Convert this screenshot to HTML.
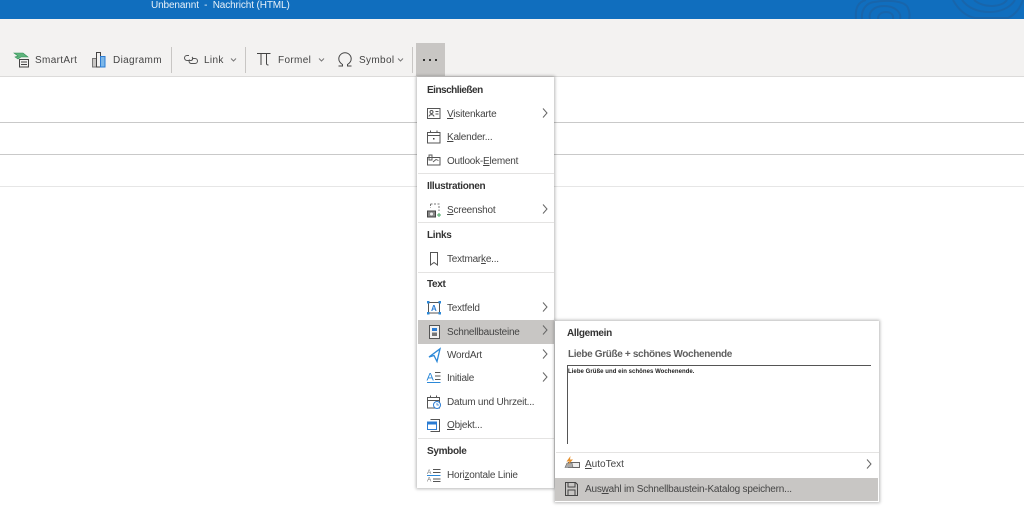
<!DOCTYPE html>
<html lang="de"><head><meta charset="utf-8"><title>Unbenannt - Nachricht (HTML)</title>
<style>
html,body{margin:0;padding:0;background:#fff;width:1024px;height:510px;overflow:hidden}
body{position:relative;font-family:"Liberation Sans",sans-serif;font-size:10px;color:#444;filter:blur(.3px)}
.a{position:absolute}
.t{position:absolute;white-space:nowrap;line-height:12px;height:12px}
.r{letter-spacing:.35px}
.m{letter-spacing:-.22px}
.h{font-weight:bold;color:#333;letter-spacing:-.32px}
.hl{position:absolute;background:#c8c6c4}
.sep{position:absolute;background:#e4e3e2;height:1px}
svg{position:absolute;overflow:visible}
u{text-decoration-thickness:1px;text-underline-offset:1px}
</style></head><body>
<div class="a" style="left:0;top:0;width:1024px;height:19px;background:#106ebe"></div>
<svg style="left:0;top:0" width="1024" height="19" fill="none" stroke="#1a64a8" stroke-width="2" opacity=".85">
<path d="M856 19C855 8 858 2 866 0M862 19C861 10 866 3 874 2C885 0 905 0 908 8C910 13 910 16 909 19M870 19C868 12 874 6 884 6C894 6 902 12 900 19M878 19C878 14 882 12 886 12C890 12 894 14 893 19"/>
<path d="M953 0C958 9 965 16 975 18H1008C1016 14 1020 8 1023 0M962 0C968 8 978 12 990 12C1000 12 1010 8 1015 0M974 0C980 5 986 6 992 6C998 6 1004 4 1007 0"/>
</svg>
<div class="t" style="left:151px;top:-1px;color:#e8f1f9;font-size:10px;letter-spacing:-.12px;line-height:13px;height:13px">Unbenannt &nbsp;-&nbsp; Nachricht (HTML)</div>
<div class="a" style="left:0;top:19px;width:1024px;height:57px;background:#f3f2f1"></div>
<div class="a" style="left:0;top:76px;width:1024px;height:1px;background:#dcdbda"></div>

<div class="a" style="left:0;top:122px;width:1024px;height:1px;background:#c9c9c9"></div>
<div class="a" style="left:0;top:154px;width:1024px;height:1px;background:#c9c9c9"></div>
<div class="a" style="left:0;top:186px;width:1024px;height:1px;background:#e6e6e6"></div>

<!-- ribbon -->
<svg style="left:13px;top:52px" width="18" height="16" fill="none"><path d="M1 1H10L15 5H8L5 7 2 5 5 4Z" fill="#5fb47c" stroke="#2f8f55" stroke-width=".6"/><rect x="6.500" y="7.500" width="9" height="7.500" fill="#f3f2f1" stroke="#444"/><path d="M8 10H14M8 12.500H14" stroke="#444"/></svg>
<div class="t r" style="left:35px;top:55px">SmartArt</div>
<svg style="left:92px;top:52px" width="14" height="16" fill="none"><rect x=".5" y="6.500" width="4" height="8.500" fill="#c8c6c4" stroke="#777"/><rect x="4.500" y=".5" width="4" height="14.500" fill="#f3f2f1" stroke="#444"/><rect x="8.500" y="4.500" width="4.500" height="10.500" fill="#7db7e8" stroke="#2b7cd3"/></svg>
<div class="t r" style="left:113px;top:55px">Diagramm</div>
<div class="a" style="left:171px;top:47px;width:1px;height:26px;background:#c8c6c4"></div>
<svg style="left:183px;top:54px" width="16" height="11" fill="none" stroke="#555"><path d="M6 1.500H4A2.500 2.500 0 0 0 4 6.500H8A2 2 0 0 0 9 3"/><path d="M9 4.500H12A2.500 2.500 0 0 1 12 9.500H8A2.500 2.500 0 0 1 6.500 5.500"/></svg>
<div class="t r" style="left:204px;top:55px">Link</div>
<svg style="left:230px;top:58px" width="7" height="4" fill="none" stroke="#777"><path d="M1 .5L3.500 3 6 .5"/></svg>
<div class="a" style="left:245px;top:47px;width:1px;height:26px;background:#c8c6c4"></div>
<svg style="left:257px;top:52px" width="14" height="14" fill="none" stroke="#444"><path d="M0 1.500H13.500M4 1.500V13M9.500 1.500V11.500Q9.500 13 11.500 13"/></svg>
<div class="t r" style="left:278px;top:55px">Formel</div>
<svg style="left:318px;top:58px" width="7" height="4" fill="none" stroke="#777"><path d="M1 .5L3.500 3 6 .5"/></svg>
<svg style="left:338px;top:52px" width="14" height="15" fill="none" stroke="#444"><path d="M.5 14H4.500V12.500C2 11 .8 9 .8 6.800A6.200 6 0 0 1 13.200 6.800C13.200 9 12 11 9.500 12.500V14H13.500"/></svg>
<div class="t r" style="left:359px;top:55px">Symbol</div>
<svg style="left:397px;top:58px" width="7" height="4" fill="none" stroke="#777"><path d="M1 .5L3.500 3 6 .5"/></svg>
<div class="a" style="left:412px;top:47px;width:1px;height:26px;background:#c8c6c4"></div>
<div class="hl" style="left:416px;top:43px;width:29px;height:33px"></div>
<div class="a" style="left:423px;top:59px;width:2px;height:2px;background:#333"></div>
<div class="a" style="left:429px;top:59px;width:2px;height:2px;background:#333"></div>
<div class="a" style="left:435px;top:59px;width:2px;height:2px;background:#333"></div>

<!-- main menu -->
<div class="a" style="left:417px;top:77px;width:137px;height:411px;background:#fff;box-shadow:0 0 3px 1px rgba(0,0,0,.28)"></div>
<div class="sep" style="left:418px;top:173px;width:136px"></div>
<div class="sep" style="left:418px;top:222px;width:136px"></div>
<div class="sep" style="left:418px;top:272px;width:136px"></div>
<div class="sep" style="left:418px;top:438px;width:136px"></div>
<div class="hl" style="left:418px;top:320px;width:136px;height:24px"></div>

<div class="t h" style="left:427px;top:85px;letter-spacing:-.5px">Einschließen</div>
<div class="t m" style="left:447px;top:109px"><u>V</u>isitenkarte</div>
<div class="t m" style="left:447px;top:132px"><u>K</u>alender...</div>
<div class="t m" style="left:447px;top:156px">Outlook-<u>E</u>lement</div>
<div class="t h" style="left:427px;top:181px">Illustrationen</div>
<div class="t m" style="left:447px;top:205px"><u>S</u>creenshot</div>
<div class="t h" style="left:427px;top:230px">Links</div>
<div class="t m" style="left:447px;top:254px">Textmar<u>k</u>e...</div>
<div class="t h" style="left:427px;top:279px">Text</div>
<div class="t m" style="left:447px;top:303px">Textfeld</div>
<div class="t m" style="left:447px;top:327px">Schnellbausteine</div>
<div class="t m" style="left:447px;top:350px">WordArt</div>
<div class="t m" style="left:447px;top:373px">Initiale</div>
<div class="t m" style="left:447px;top:397px">Datum und Uhrzeit...</div>
<div class="t m" style="left:447px;top:420px"><u>O</u>bjekt...</div>
<div class="t h" style="left:427px;top:446px">Symbole</div>
<div class="t m" style="left:447px;top:470px">Hori<u>z</u>ontale Linie</div>

<!-- chevrons -->
<svg style="left:542px;top:108px" width="6" height="10" fill="none" stroke="#666"><path d="M1 .5L5 5 1 9.500"/></svg>
<svg style="left:542px;top:204px" width="6" height="10" fill="none" stroke="#666"><path d="M1 .5L5 5 1 9.500"/></svg>
<svg style="left:542px;top:302px" width="6" height="10" fill="none" stroke="#666"><path d="M1 .5L5 5 1 9.500"/></svg>
<svg style="left:542px;top:325px" width="6" height="10" fill="none" stroke="#666"><path d="M1 .5L5 5 1 9.500"/></svg>
<svg style="left:542px;top:349px" width="6" height="10" fill="none" stroke="#666"><path d="M1 .5L5 5 1 9.500"/></svg>
<svg style="left:542px;top:372px" width="6" height="10" fill="none" stroke="#666"><path d="M1 .5L5 5 1 9.500"/></svg>

<!-- menu icons -->
<svg style="left:427px;top:108px" width="14" height="12" fill="none" stroke="#555"><rect x=".5" y=".5" width="12.500" height="10"/><circle cx="4.500" cy="4" r="1.500"/><path d="M2 8.500C2.500 6 6.500 6 7 8.500M8.500 3.500H11.500M8.500 6H11.500"/></svg>
<svg style="left:427px;top:130px" width="14" height="14" fill="none" stroke="#555"><rect x=".5" y="2.500" width="12.500" height="10.500"/><path d="M.5 5.500H13M3.500 .5V3M10 .5V3"/><rect x="6" y="8" width="1.500" height="1.500" fill="#444" stroke="none"/></svg>
<svg style="left:427px;top:154px" width="14" height="13" fill="none" stroke="#555"><rect x=".5" y="3.500" width="12.500" height="7.500"/><path d="M2 1H5V6H2ZM6 8L9 5.500 11.500 6.500" stroke-width=".9"/></svg>
<svg style="left:427px;top:203px" width="14" height="14" fill="none"><path d="M3.500 1H12V8" stroke="#777" stroke-dasharray="2 1.500"/><path d="M3.500 1V5" stroke="#777" stroke-dasharray="2 1.500"/><rect x=".5" y="8" width="8" height="6" fill="#888" stroke="#444"/><circle cx="4.500" cy="11" r="1.500" fill="#eee"/><path d="M12 10V14M10 12H14" stroke="#4aa564"/></svg>
<svg style="left:430px;top:252px" width="9" height="14" fill="none" stroke="#555"><path d="M.5 .5H7.500V13L4 10.500.5 13Z"/></svg>
<svg style="left:427px;top:301px" width="14" height="14" fill="none"><rect x="1.500" y="1.500" width="11" height="10.500" stroke="#555"/><text x="4" y="10" font-family="Liberation Sans" font-size="8" font-weight="bold" fill="#2b7cd3">A</text><g fill="#2b88d8"><rect x="0" y="0" width="2.500" height="2.500"/><rect x="11.500" y="0" width="2.500" height="2.500"/><rect x="0" y="11" width="2.500" height="2.500"/><rect x="11.500" y="11" width="2.500" height="2.500"/></g></svg>
<svg style="left:429px;top:325px" width="11" height="14" fill="none"><rect x=".5" y=".5" width="10" height="13" fill="#f3f2f1" stroke="#555"/><rect x="3" y="3" width="5" height="3" fill="#2b7cd3"/><rect x="3" y="7.500" width="5" height="3.500" fill="#777"/></svg>
<svg style="left:428px;top:348px" width="13" height="14" fill="none" stroke="#2b88d8" stroke-width="1.300"><path d="M12 .8L1 9 6 7.500 9 13.500 12 .8Z"/></svg>
<svg style="left:427px;top:371px" width="14" height="13" fill="none"><text x="-.5" y="9.500" font-family="Liberation Sans" font-size="11" fill="#2b88d8">A</text><path d="M8 1.500H13.500M8 5H13.500M8 8.500H13.500" stroke="#555"/><path d="M0 11.500H13.500" stroke="#2b88d8"/></svg>
<svg style="left:427px;top:395px" width="14" height="14" fill="none"><rect x=".5" y="2.500" width="12" height="10.500" stroke="#555"/><path d="M.5 5.500H12.500M3.500 .5V3M9.500 .5V3" stroke="#555"/><circle cx="10" cy="10" r="3.500" fill="#fff" stroke="#2b7cd3"/><path d="M10 8V10H12" stroke="#2b7cd3" stroke-width=".8"/></svg>
<svg style="left:427px;top:419px" width="14" height="13" fill="none"><path d="M3.500 .5H12.500V12.500H3.500" stroke="#555"/><rect x=".5" y="3" width="9" height="7.500" fill="#fff" stroke="#2b7cd3"/><rect x=".5" y="3" width="9" height="2.500" fill="#2b7cd3"/></svg>
<svg style="left:427px;top:468px" width="14" height="14" fill="none"><text x="0" y="6" font-family="Liberation Sans" font-size="6.500" fill="#777">A</text><text x="0" y="13.500" font-family="Liberation Sans" font-size="6.500" fill="#777">A</text><path d="M6 1.500H13.500M6 4.500H13.500M6 11H13.500M6 13.500H13.500" stroke="#555"/><path d="M0 7.500H13.500" stroke="#2b88d8"/></svg>

<!-- submenu -->
<div class="a" style="left:555px;top:321px;width:324px;height:181px;background:#fff;box-shadow:0 0 3px 1px rgba(0,0,0,.28)"></div>
<div class="t h" style="left:567px;top:328px">Allgemein</div>
<div class="t" style="left:568px;top:349px;font-weight:bold;color:#5f5f5f;letter-spacing:-.35px">Liebe Grüße + schönes Wochenende</div>
<div class="a" style="left:567px;top:365px;width:304px;height:1px;background:#555"></div>
<div class="a" style="left:567px;top:365px;width:1px;height:79px;background:#555"></div>
<div class="t" style="left:568px;top:366px;font-size:6px;color:#222;font-weight:bold;letter-spacing:.05px">Liebe Grüße und ein schönes Wochenende.</div>
<div class="sep" style="left:556px;top:452px;width:323px"></div>
<div class="t" style="left:585px;top:459px"><u>A</u>utoText</div>
<svg style="left:866px;top:459px" width="6" height="10" fill="none" stroke="#666"><path d="M1 .5L5 5 1 9.500"/></svg>
<svg style="left:565px;top:456px" width="15" height="13" fill="none"><rect x="3.500" y="6.500" width="11" height="5" fill="#eee" stroke="#666"/><path d="M0 11.500H8L7 7H2Z" fill="#aaa" stroke="#666" stroke-width=".6"/><path d="M5.500 0L1.500 5.500H4.500L3 9L8 3.500H5Z" fill="#e8912c"/></svg>
<div class="hl" style="left:555px;top:478px;width:323px;height:23px"></div>
<div class="t" style="left:585px;top:484px;letter-spacing:-.2px">Aus<u>w</u>ahl im Schnellbaustein-Katalog speichern...</div>
<svg style="left:565px;top:482px" width="13" height="14" fill="none" stroke="#444"><path d="M.5 .5H10.500L12.500 2.500V13.500H.5Z"/><path d="M3 .5V5H10V.5M3 13.500V8H10V13.500"/></svg>
</body></html>
